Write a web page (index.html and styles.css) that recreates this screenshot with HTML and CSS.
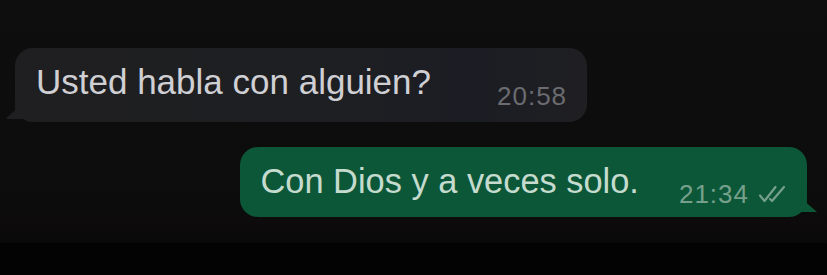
FILE: index.html
```html
<!DOCTYPE html>
<html lang="es">
<head>
<meta charset="utf-8">
<title>Chat</title>
<link rel="stylesheet" href="styles.css">
</head>
<body>
<div class="chat">
  <div class="bubble incoming">
    <span class="text">Usted habla con alguien?</span>
    <span class="meta"><span class="time">20:58</span></span>
  </div>
  <div class="bubble outgoing">
    <span class="text">Con Dios y a veces solo.</span>
    <span class="meta"><span class="time">21:34</span>
      <svg class="ticks" width="29" height="18" viewBox="0 0 29 18" aria-hidden="true">
        <path d="M2 10.5 L6.5 16 L17.5 2" fill="none" stroke="currentColor" stroke-width="2.2" stroke-linecap="round" stroke-linejoin="round"/>
        <path d="M12 14 L14 16 L26 2" fill="none" stroke="currentColor" stroke-width="2.2" stroke-linecap="round" stroke-linejoin="round"/>
      </svg>
    </span>
  </div>
</div>
<div class="bottom"></div>
</body>
</html>
```

FILE: styles.css
```css
html, body {
  margin: 0;
  padding: 0;
  background: #030303;
}

body {
  width: 827px;
  height: 275px;
  overflow: hidden;
  font-family: "Liberation Sans", Arial, sans-serif;
}

.chat {
  height: 243px;
  box-sizing: border-box;
  padding-top: 48px;
  background: linear-gradient(180deg, #0e0e0e 0%, #0c0c0c 85%, #0d0a0b 93%, #070908 100%);
  display: flex;
  flex-direction: column;
}

.bottom {
  height: 32px;
  background: #030303;
}

.bubble {
  position: relative;
  display: flex;
  align-items: flex-start;
  border-radius: 18px;
}

.bubble .text {
  font-size: 35px;
  line-height: 40px;
  white-space: nowrap;
}

.bubble .meta {
  display: flex;
  align-items: center;
  white-space: nowrap;
}

.bubble .time {
  font-size: 26px;
  line-height: 30px;
  letter-spacing: 1px;
}

.incoming {
  align-self: flex-start;
  margin-left: 15px;
  padding: 14px 20px 11px 21px;
  gap: 66px;
  background: linear-gradient(90deg, #1f1f21 0%, #1e1f22 55%, #1b1d24 80%, #1f1f22 100%);
  color: #cfcfd4;
}

.incoming::before {
  content: "";
  position: absolute;
  left: -10px;
  bottom: 3px;
  width: 24px;
  height: 22px;
  background: #1f1f21;
  border-bottom-left-radius: 4px;
  clip-path: polygon(100% 0, 100% 100%, 0 100%, 42% 60%, 45% 0);
}

.incoming .meta {
  margin-top: 19px;
  color: #6b6b70;
}

.outgoing {
  align-self: flex-end;
  margin-right: 20px;
  margin-top: 25px;
  padding: 14px 20px 8px 20px;
  gap: 40px;
  background: #0c5738;
  color: #c5dbce;
}

.outgoing::after {
  content: "";
  position: absolute;
  right: -10px;
  bottom: 5px;
  width: 24px;
  height: 22px;
  background: #0c5738;
  clip-path: polygon(0 0, 55% 0, 58% 60%, 100% 100%, 0 100%);
}

.outgoing .text {
  font-size: 34.4px;
}

.outgoing .meta {
  margin-top: 18px;
  color: #76a08b;
  gap: 9px;
}

.ticks {
  display: block;
  color: #76a08b;
}
```
